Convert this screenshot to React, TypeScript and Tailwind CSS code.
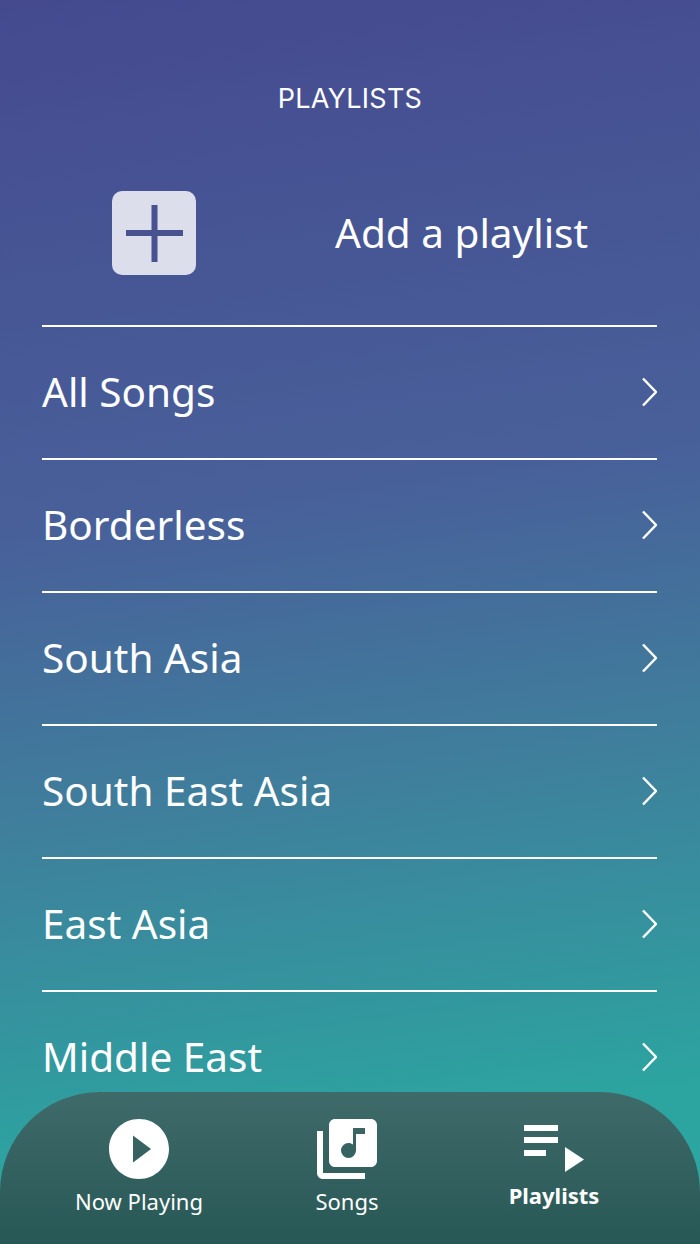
import React from 'react';
import { MdLibraryMusic, MdPlayCircleFilled } from 'react-icons/md';

const playlists = ['All Songs', 'Borderless', 'South Asia', 'South East Asia', 'East Asia', 'Middle East'];

const Chevron = () => (
  <svg width="16" height="30" viewBox="0 0 16 30" fill="none" className="shrink-0">
    <path d="M2 1.5L15 15L2 28.5" stroke="white" strokeWidth="2.5" />
  </svg>
);

const PlaylistIcon = () => (
  <svg width="60" height="47" viewBox="0 0 60 47" fill="white">
    <rect x="0" y="0" width="34" height="6" />
    <rect x="0" y="12" width="34" height="6" />
    <rect x="0" y="25" width="22" height="6" />
    <path d="M41 22L60 34.5L41 47Z" />
  </svg>
);

export default function App() {
  return (
    <div className="relative h-[1244px] w-[700px] overflow-hidden bg-[linear-gradient(172deg,#454a8f_0%,#48609a_40%,#3f7f9c_62%,#2ca4a0_88%,#2ca8a0_100%)] font-['Noto_Sans','Open_Sans',sans-serif] text-white">
      <h1 className="pt-[81px] text-center font-['Inter',sans-serif] text-[27px] leading-[36px] tracking-[0.25px]">
        PLAYLISTS
      </h1>

      <div className="ml-[42px] mr-[43px] mt-[74px] flex h-[136px] items-start border-b-2 border-white pl-[70px]">
        <div className="flex h-[84px] w-[84px] items-center justify-center rounded-[10px] bg-[#dcdeeb]">
          <svg width="57" height="57" viewBox="0 0 57 57" fill="#47528f">
            <rect x="0" y="25" width="57" height="6" />
            <rect x="25.5" y="0" width="6" height="57" />
          </svg>
        </div>
        <span className="ml-[139px] text-[40.5px] leading-[84px]">Add a playlist</span>
      </div>

      <ul className="ml-[42px] mr-[43px] flex flex-col">
        {playlists.map((name) => (
          <li key={name} className="flex h-[133px] items-center justify-between border-b-2 border-white pb-[1px]">
            <span className="text-[40.5px] leading-[54px]">{name}</span>
            <Chevron />
          </li>
        ))}
      </ul>

      <nav className="absolute bottom-0 left-0 flex h-[152px] w-full rounded-t-[100px] bg-[linear-gradient(180deg,#3f6a6a_0%,#275855_100%)]">
        <div className="flex w-[278px] flex-col items-center pt-[21px]">
          <MdPlayCircleFilled size={72} />
          <span className="mt-[1px] text-[22px] leading-[30px]">Now Playing</span>
        </div>
        <div className="flex w-[138px] flex-col items-center pt-[21px]">
          <MdLibraryMusic size={72} />
          <span className="mt-[1px] text-[22px] leading-[30px]">Songs</span>
        </div>
        <div className="flex flex-1 flex-col items-center pr-[8px] pt-[33px]">
          <PlaylistIcon />
          <span className="mt-[8px] text-[22px] font-bold leading-[30px]">Playlists</span>
        </div>
      </nav>
    </div>
  );
}
